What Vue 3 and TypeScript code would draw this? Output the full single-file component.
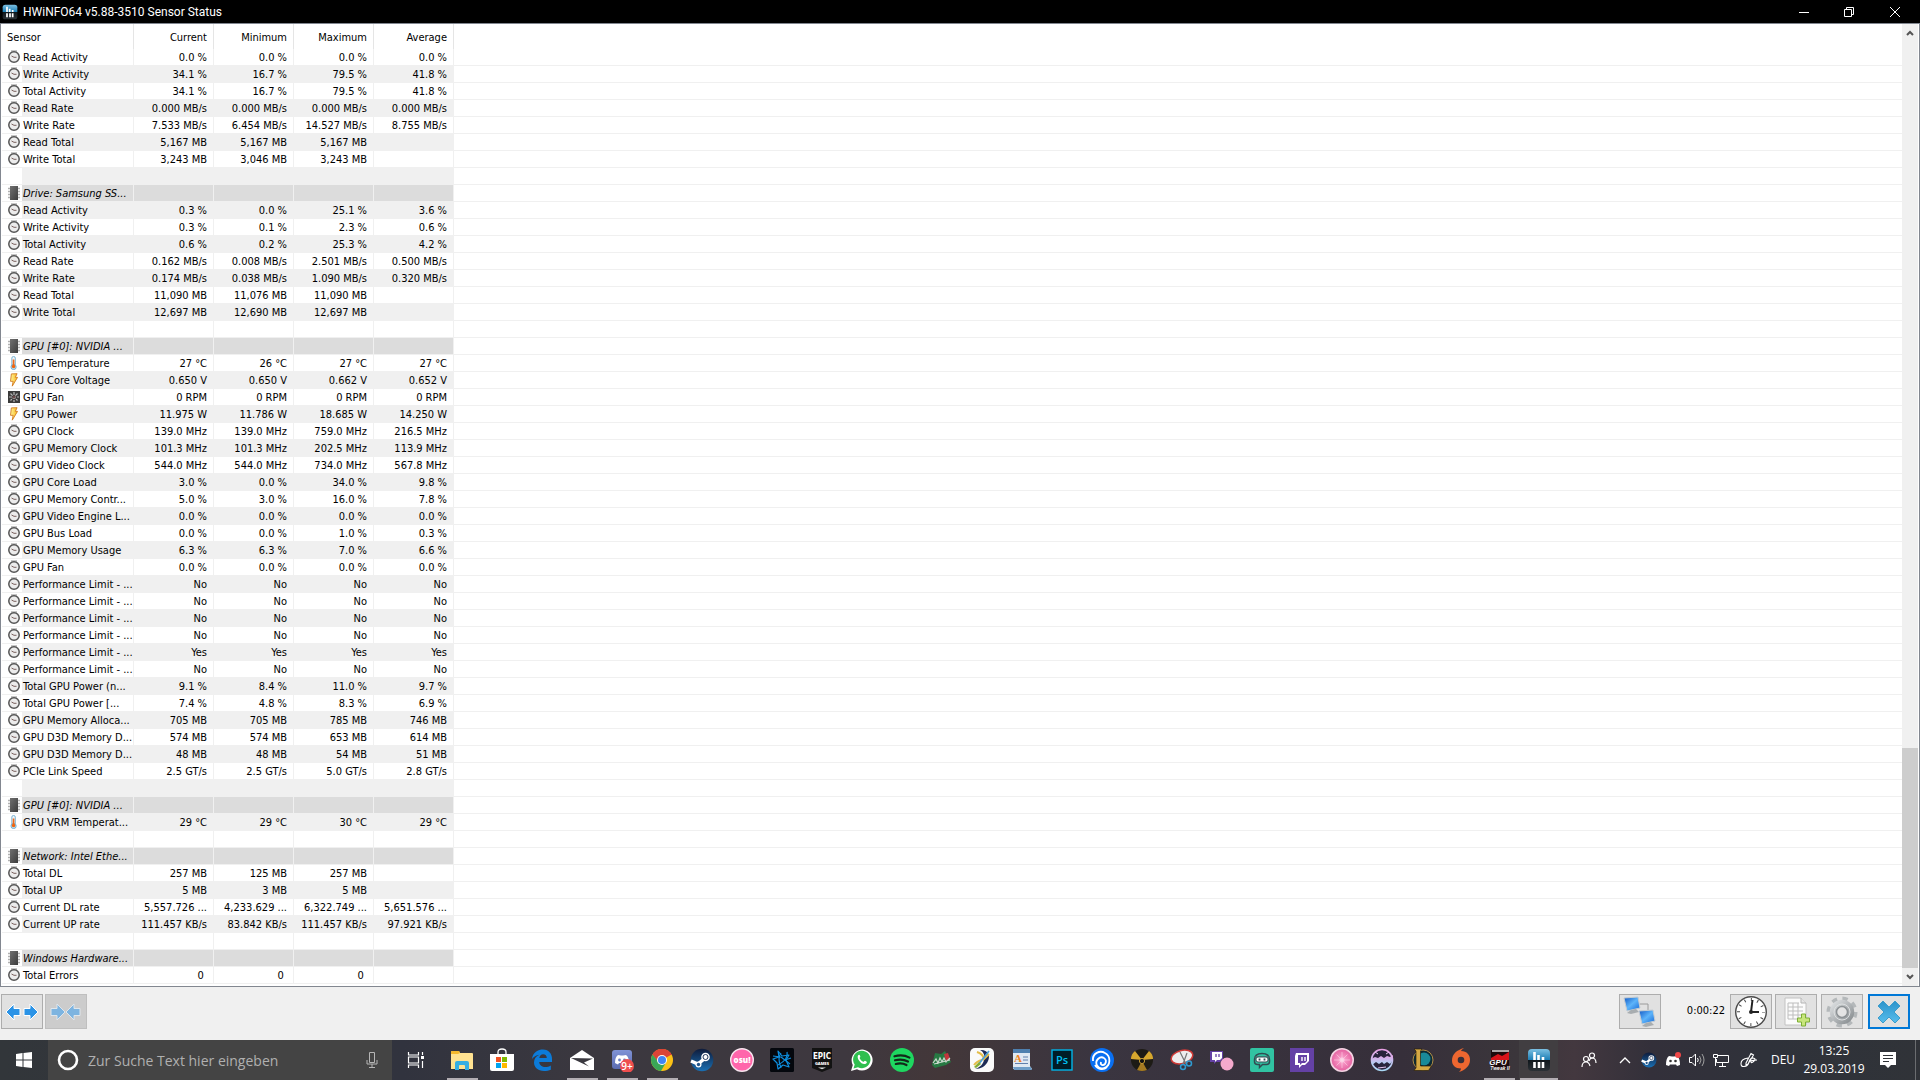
<script setup lang="ts">
import { ref } from 'vue'

type Kind = 'clock' | 'chip' | 'temp' | 'volt' | 'fan' | ''
interface Row {
  kind: Kind
  label: string
  values: string[]
}

const row = (kind: Kind, label: string, values = ''): Row => {
  const list = values ? values.split('|') : []
  while (list.length < 4) list.push('')
  return { kind, label, values: list }
}
const same = (value: string) => [value, value, value, value].join('|')

const columns = ['Current', 'Minimum', 'Maximum', 'Average']

const rows: Row[] = [
  row('clock', 'Read Activity', same('0.0 %')),
  row('clock', 'Write Activity', '34.1 %|16.7 %|79.5 %|41.8 %'),
  row('clock', 'Total Activity', '34.1 %|16.7 %|79.5 %|41.8 %'),
  row('clock', 'Read Rate', same('0.000 MB/s')),
  row('clock', 'Write Rate', '7.533 MB/s|6.454 MB/s|14.527 MB/s|8.755 MB/s'),
  row('clock', 'Read Total', '5,167 MB|5,167 MB|5,167 MB'),
  row('clock', 'Write Total', '3,243 MB|3,046 MB|3,243 MB'),
  row('', ''),
  row('chip', 'Drive: Samsung SS...'),
  row('clock', 'Read Activity', '0.3 %|0.0 %|25.1 %|3.6 %'),
  row('clock', 'Write Activity', '0.3 %|0.1 %|2.3 %|0.6 %'),
  row('clock', 'Total Activity', '0.6 %|0.2 %|25.3 %|4.2 %'),
  row('clock', 'Read Rate', '0.162 MB/s|0.008 MB/s|2.501 MB/s|0.500 MB/s'),
  row('clock', 'Write Rate', '0.174 MB/s|0.038 MB/s|1.090 MB/s|0.320 MB/s'),
  row('clock', 'Read Total', '11,090 MB|11,076 MB|11,090 MB'),
  row('clock', 'Write Total', '12,697 MB|12,690 MB|12,697 MB'),
  row('', ''),
  row('chip', 'GPU [#0]: NVIDIA ...'),
  row('temp', 'GPU Temperature', '27 °C|26 °C|27 °C|27 °C'),
  row('volt', 'GPU Core Voltage', '0.650 V|0.650 V|0.662 V|0.652 V'),
  row('fan', 'GPU Fan', same('0 RPM')),
  row('volt', 'GPU Power', '11.975 W|11.786 W|18.685 W|14.250 W'),
  row('clock', 'GPU Clock', '139.0 MHz|139.0 MHz|759.0 MHz|216.5 MHz'),
  row('clock', 'GPU Memory Clock', '101.3 MHz|101.3 MHz|202.5 MHz|113.9 MHz'),
  row('clock', 'GPU Video Clock', '544.0 MHz|544.0 MHz|734.0 MHz|567.8 MHz'),
  row('clock', 'GPU Core Load', '3.0 %|0.0 %|34.0 %|9.8 %'),
  row('clock', 'GPU Memory Contr...', '5.0 %|3.0 %|16.0 %|7.8 %'),
  row('clock', 'GPU Video Engine L...', same('0.0 %')),
  row('clock', 'GPU Bus Load', '0.0 %|0.0 %|1.0 %|0.3 %'),
  row('clock', 'GPU Memory Usage', '6.3 %|6.3 %|7.0 %|6.6 %'),
  row('clock', 'GPU Fan', same('0.0 %')),
  row('clock', 'Performance Limit - ...', same('No')),
  row('clock', 'Performance Limit - ...', same('No')),
  row('clock', 'Performance Limit - ...', same('No')),
  row('clock', 'Performance Limit - ...', same('No')),
  row('clock', 'Performance Limit - ...', same('Yes')),
  row('clock', 'Performance Limit - ...', same('No')),
  row('clock', 'Total GPU Power (n...', '9.1 %|8.4 %|11.0 %|9.7 %'),
  row('clock', 'Total GPU Power [...', '7.4 %|4.8 %|8.3 %|6.9 %'),
  row('clock', 'GPU Memory Alloca...', '705 MB|705 MB|785 MB|746 MB'),
  row('clock', 'GPU D3D Memory D...', '574 MB|574 MB|653 MB|614 MB'),
  row('clock', 'GPU D3D Memory D...', '48 MB|48 MB|54 MB|51 MB'),
  row('clock', 'PCIe Link Speed', '2.5 GT/s|2.5 GT/s|5.0 GT/s|2.8 GT/s'),
  row('', ''),
  row('chip', 'GPU [#0]: NVIDIA ...'),
  row('temp', 'GPU VRM Temperat...', '29 °C|29 °C|30 °C|29 °C'),
  row('', ''),
  row('chip', 'Network: Intel Ethe...'),
  row('clock', 'Total DL', '257 MB|125 MB|257 MB'),
  row('clock', 'Total UP', '5 MB|3 MB|5 MB'),
  row('clock', 'Current DL rate', '5,557.726 ...|4,233.629 ...|6,322.749 ...|5,651.576 ...'),
  row('clock', 'Current UP rate', '111.457 KB/s|83.842 KB/s|111.457 KB/s|97.921 KB/s'),
  row('', ''),
  row('chip', 'Windows Hardware...'),
  row('clock', 'Total Errors', '0\u00a0|0\u00a0|0\u00a0'),
]

interface Mark {
  text: string
  x: number
  y: number
  size: number
  cls: string
}
interface Task {
  id: string
  name: string
  running?: boolean
  active?: boolean
  narrow?: boolean
  marks?: Mark[]
}
const tasks: Task[] = [
  { id: 'explorer', name: 'Explorer', running: true },
  { id: 'store', name: 'Store' },
  { id: 'edge', name: 'Edge' },
  { id: 'mail', name: 'Mail', running: true },
  { id: 'discord', name: 'Discord', running: true, marks: [{ text: '9+', x: 17, y: 22, size: 10, cls: 'badge' }] },
  { id: 'chrome', name: 'Chrome', running: true },
  { id: 'steam', name: 'Steam' },
  { id: 'osu', name: 'osu!', marks: [{ text: 'osu!', x: 12, y: 15, size: 8, cls: 'heavy' }] },
  { id: 'bnet', name: 'Battle.net' },
  {
    id: 'epic',
    name: 'Epic Games',
    marks: [
      { text: 'EPIC', x: 12, y: 11, size: 8, cls: 'tall' },
      { text: 'GAMES', x: 12, y: 17, size: 4, cls: 'heavy' },
    ],
  },
  { id: 'whatsapp', name: 'WhatsApp' },
  { id: 'spotify', name: 'Spotify' },
  { id: 'leaf', name: 'Game' },
  { id: 'paint', name: 'Paint Tool' },
  { id: 'wordpad', name: 'WordPad', marks: [{ text: 'A', x: 8, y: 14, size: 11, cls: 'letter' }] },
  { id: 'ps', name: 'Photoshop', marks: [{ text: 'Ps', x: 12, y: 16, size: 11, cls: 'adobe' }] },
  { id: 'uplay', name: 'Uplay' },
  { id: 'hazard', name: 'Afterburner' },
  { id: 'snip', name: 'Snipping Tool' },
  { id: 'twitchball', name: 'Stream Companion' },
  { id: 'slobs', name: 'Streamlabs' },
  { id: 'twitch', name: 'Twitch' },
  { id: 'lazer', name: 'Lazer' },
  { id: 'orb', name: 'Orb' },
  { id: 'lol', name: 'League', narrow: true },
  { id: 'origin', name: 'Origin', narrow: true },
  {
    id: 'tweak',
    name: 'GPU Tweak',
    narrow: true,
    running: true,
    marks: [
      { text: 'GPU', x: 10, y: 17, size: 8, cls: 'slant' },
      { text: 'Tweak II', x: 12, y: 22, size: 5, cls: 'slant' },
    ],
  },
  { id: 'hwinfo', name: 'HWiNFO64', narrow: true, running: true, active: true },
]

const query = ref('')
</script>

<template>
  <div class="screen">
    <svg class="sprite" width="0" height="0" aria-hidden="true">
      <defs>
        <linearGradient id="gChip" x1="0" y1="0" x2="1" y2="1">
          <stop offset="0" stop-color="#707070" /><stop offset="1" stop-color="#3c3c3c" />
        </linearGradient>
        <linearGradient id="gBolt" x1="0" y1="0" x2="1" y2="0">
          <stop offset="0" stop-color="#fff59a" /><stop offset="1" stop-color="#f9b81c" />
        </linearGradient>
        <linearGradient id="gHw" x1="0" y1="0" x2="0" y2="1">
          <stop offset="0" stop-color="#7cc0e2" /><stop offset="0.5" stop-color="#1b7db4" />
          <stop offset="0.51" stop-color="#10171c" /><stop offset="1" stop-color="#2b3136" />
        </linearGradient>
        <linearGradient id="gScreen" x1="0" y1="0" x2="1" y2="1">
          <stop offset="0" stop-color="#0f56c4" /><stop offset="0.5" stop-color="#5db4fa" />
          <stop offset="1" stop-color="#1566d6" />
        </linearGradient>
        <linearGradient id="gGear" x1="0" y1="0" x2="1" y2="1">
          <stop offset="0" stop-color="#d9dcde" /><stop offset="1" stop-color="#8c9194" />
        </linearGradient>
        <linearGradient id="gX" x1="0" y1="0" x2="0" y2="1">
          <stop offset="0" stop-color="#2b93cb" /><stop offset="1" stop-color="#58bdec" />
        </linearGradient>
        <linearGradient id="gSteam" x1="0" y1="0" x2="0" y2="1">
          <stop offset="0" stop-color="#0f1b3a" /><stop offset="1" stop-color="#1a70b4" />
        </linearGradient>
        <linearGradient id="gDiscord" x1="0" y1="0" x2="0" y2="1">
          <stop offset="0" stop-color="#8093d6" /><stop offset="1" stop-color="#5b6bb0" />
        </linearGradient>
        <linearGradient id="gOrb" x1="0" y1="0" x2="0" y2="1">
          <stop offset="0" stop-color="#e8a0e4" /><stop offset="1" stop-color="#a9d8f5" />
        </linearGradient>
        <radialGradient id="gPink">
          <stop offset="0" stop-color="#ffffff" /><stop offset="0.3" stop-color="#f795c4" />
          <stop offset="1" stop-color="#e3609f" />
        </radialGradient>
      </defs>

      <symbol id="i-clock" viewBox="0 0 12 14">
        <path d="M3 1h6" stroke="#b5b5b5" stroke-width="1.500" />
        <circle cx="6" cy="7" r="5.200" fill="#ececec" stroke="#555" stroke-width="1.500" />
        <path d="M3.500 6L6 7.300L8.500 7.300" stroke="#7b625f" stroke-width="1" fill="none" />
      </symbol>
      <symbol id="i-chip" viewBox="0 0 12 14">
        <path d="M0 2.500h12M0 5.500h12M0 8.500h12M0 11.500h12" stroke="#b0b0b0" stroke-width="1.500" />
        <rect x="2" y="0" width="8" height="14" fill="url(#gChip)" />
      </symbol>
      <symbol id="i-temp" viewBox="0 0 12 16">
        <rect x="3.500" y="0.500" width="4" height="11" rx="2" fill="#eef6fb" stroke="#6da9cc" />
        <circle cx="5.500" cy="12.500" r="3" fill="#bfe0f2" stroke="#6da9cc" />
        <path d="M5.500 4v8" stroke="#ee6a1a" stroke-width="2" />
        <circle cx="5.500" cy="12" r="2" fill="#f0640f" />
      </symbol>
      <symbol id="i-volt" viewBox="0 0 12 16">
        <path d="M3 1L9.500 .8L7.500 5L10 5L4 15L5 9.500L2 9.500z" fill="url(#gBolt)" stroke="#d1781c" />
      </symbol>
      <symbol id="i-fan" viewBox="0 0 12 12">
        <rect width="12" height="12" fill="#3b3b3b" />
        <path d="M6 1v10M1 6h10M2.500 2.500l7 7M9.500 2.500l-7 7" stroke="#b9b9b9" stroke-width="1.200" stroke-dasharray="3 1" />
        <circle cx="6" cy="6" r="1.500" fill="#6b4a4a" />
      </symbol>

      <symbol id="i-hwinfo" viewBox="0 0 24 24">
        <rect x="1" y="1" width="22" height="22" rx="4" fill="url(#gHw)" />
        <path d="M7.500 4v8M11.500 7v5M16 9v3M7.500 14v6M12 14v6M16 14v6" stroke="#fff" stroke-width="2.600" />
      </symbol>
      <symbol id="i-explorer" viewBox="0 0 24 24">
        <path d="M1 5V4q0-1 1-1h7l1 2h12q1 0 1 1v15H1z" fill="#ffe291" />
        <path d="M1 6V4q0-1 1-1h7l1 2-2 1z" fill="#f5b92e" />
        <path d="M5 22v-7q0-2 2-2h10q2 0 2 2v7h-4v-4q0-1-1-1h-4q-1 0-1 1v4z" fill="#35aee2" />
      </symbol>
      <symbol id="i-store" viewBox="0 0 24 24">
        <path d="M8 7V4q0-3 4-3t4 3v3" fill="none" stroke="#fff" stroke-width="1.300" />
        <path d="M0 6h24v15q0 2-2 2H2q-2 0-2-2z" fill="#fff" />
        <path d="M6 9h5v5H6z" fill="#f25022" /><path d="M12 9h5v5h-5z" fill="#7fba00" />
        <path d="M6 15h5v5H6z" fill="#00a4ef" /><path d="M12 15h5v5h-5z" fill="#ffb900" />
      </symbol>
      <symbol id="i-edge" viewBox="0 0 24 24">
        <path d="M2 11C3 4 8 1.500 13 1.500c6 0 9 4.500 9 9.500v3H9.200c.3 3.500 3 5 6 5 2 0 4-.6 5.600-1.600v4.400C19 22.700 16.500 23 14 23 7.800 23 4 19.300 4 14.500c0-3.500 2-6.500 5.500-7.800C6 7 3.500 8.700 2 11zm7.300-1h7.500c0-2.300-1.400-3.800-3.600-3.800-2.100 0-3.500 1.600-3.900 3.800z" fill="#0c7bd8" />
      </symbol>
      <symbol id="i-mail" viewBox="0 0 24 24">
        <path d="M0 10L12 2l12 8v12H0z" fill="#fff" />
        <path d="M1 10L23 10.500l-9 4 5 4z" fill="#3a383f" />
      </symbol>
      <symbol id="i-discord" viewBox="0 0 24 24">
        <rect x="2" y="2" width="20" height="19" rx="3" fill="url(#gDiscord)" />
        <path d="M5 15q0-6 3-8l3 .5h2l3-.5q3 2 3 8l-3 1.500-1-1.500h-6l-1 1.500z" fill="#fff" />
        <circle cx="9.500" cy="12" r="1.400" fill="#6f80c4" /><circle cx="14.500" cy="12" r="1.400" fill="#6f80c4" />
        <circle cx="17" cy="18" r="7" fill="#ef4e4e" />
      </symbol>
      <symbol id="i-chrome" viewBox="0 0 24 24">
        <circle cx="12" cy="12" r="11" fill="#fbc116" />
        <path d="M12 12L2.500 6.500A11 11 0 0 1 21.500 6.500z" fill="#db4437" /><path d="M12 7h9.800A11 11 0 0 0 2.500 6.500l5 7z" fill="#db4437" />
        <path d="M2.500 6.500A11 11 0 0 0 11 23l5-8.500-7.500-.5z" fill="#3aa757" />
        <circle cx="12" cy="12" r="5" fill="#fff" /><circle cx="12" cy="12" r="4" fill="#4285f4" />
      </symbol>
      <symbol id="i-steam" viewBox="0 0 24 24">
        <circle cx="12" cy="12" r="11.300" fill="url(#gSteam)" />
        <path d="M1 13l7 3 6-5" stroke="#fff" stroke-width="3.500" fill="none" />
        <circle cx="15.500" cy="9" r="4.300" fill="#fff" /><circle cx="15.500" cy="9" r="2.500" fill="none" stroke="#24395c" />
        <circle cx="8.500" cy="16.500" r="3" fill="#fff" /><circle cx="8.500" cy="16.500" r="1.700" fill="#22558a" />
      </symbol>
      <symbol id="i-osu" viewBox="0 0 24 24">
        <circle cx="12" cy="12" r="11.300" fill="#ff66ab" stroke="#f7e6ef" stroke-width="1.400" />
      </symbol>
      <symbol id="i-bnet" viewBox="0 0 24 24">
        <rect width="24" height="24" rx="1.500" fill="#04070d" />
        <g fill="none" stroke="#0e8fe0" stroke-width="1.200" stroke-linejoin="round">
          <path d="M8 3l4 5 7-1-3 5 3 7-6-2-5 4-1-6-4-4 6-2z" />
          <path d="M3 8l8 1 9 7M11 5q-4 5 0 15M17 4q2 7-9 13M21 10l-6 2" />
        </g>
      </symbol>
      <symbol id="i-epic" viewBox="0 0 24 24">
        <path d="M2 0h20v20l-10 4-10-4z" fill="#121212" />
        <path d="M8 19.500h8l-4 1.700z" fill="#ddd" />
      </symbol>
      <symbol id="i-whatsapp" viewBox="0 0 24 24">
        <path d="M1 23l1.800-6A10.500 10.500 0 1 1 7 21.300z" fill="#fff" />
        <path d="M3.500 20.500l1.200-4A8.700 8.700 0 1 1 8 19.300z" fill="#2fbf4f" />
        <path d="M8 7.500c1-1.200 1.800-.8 2.300 1 .3 1-1 1-.6 1.800 1 2 2 2.800 3.600 3.400.7.300 1-1.300 1.800-1 2.300 1 2.200 1.500 1 2.700-3.500 3-10-4.500-8.100-7.900z" fill="#fff" />
      </symbol>
      <symbol id="i-spotify" viewBox="0 0 24 24">
        <circle cx="12" cy="12" r="12" fill="#1ed760" />
        <path d="M4.500 8.300q8-2.500 15 1.300M5 12.300q7-2 13 1.200M5.800 16q6-1.500 10.700 1" fill="none" stroke="#12291a" stroke-width="2.200" stroke-linecap="round" />
      </symbol>
      <symbol id="i-leaf" viewBox="0 0 24 24">
        <path d="M5 5l6 1 4-3 2 4 4 7-5 3-11 3-3-3z" fill="#277a43" /><path d="M14 6l4-1 2 6-4 2z" fill="#c4363c" />
        <path d="M3 15l3-4 2 4 2-5 2 4 2-4 2 4 4-4M4 16l16-4" stroke="#c9d9cd" stroke-width="1.200" fill="none" />
      </symbol>
      <symbol id="i-paint" viewBox="0 0 24 24">
        <rect width="24" height="24" rx="5" fill="#fafafa" />
        <path d="M10 2c7-1 11 5 8 11-2 5-7 8-13 8 6-2 8-5 9-9s0-8-4-10z" fill="#1d2b55" />
        <path d="M7 4q6 2 7 7l5-5M4 17q3-4 8-5" stroke="#e4bd49" stroke-width="2" fill="none" />
        <path d="M19 3L8 17" stroke="#4d9fd8" stroke-width="1.700" /><path d="M9 14l2 2-5 4-2-1z" fill="#86ad33" />
      </symbol>
      <symbol id="i-wordpad" viewBox="0 0 24 24">
        <path d="M3 1h17v17l2 3H3z" fill="#dfe8f2" /><path d="M3 1h17v4H3z" fill="#4e7fae" /><path d="M3 19h18l1 3H4z" fill="#6f9dc7" />
        <path d="M13 9h5M13 12h5M5 15.500h13" stroke="#6180ad" />
      </symbol>
      <symbol id="i-ps" viewBox="0 0 24 24">
        <rect x="2" y="2" width="20" height="20" fill="#001d26" stroke="#00b5e8" stroke-width="1.400" />
      </symbol>
      <symbol id="i-uplay" viewBox="0 0 24 24">
        <circle cx="12" cy="12" r="12" fill="#0a70f2" />
        <path d="M3 13C2 5 10 2 15 5c6 3 6 13-1 15-6 2-10-5-6-9 4-4 10 0 7 5-2 2-5 1-4-2M5 17c3 5 9 5 12 2" fill="none" stroke="#fff" stroke-width="1.800" />
      </symbol>
      <symbol id="i-hazard" viewBox="0 0 24 24">
        <circle cx="12" cy="12" r="11" fill="#1d1b15" />
        <path d="M12 12L5 3Q1 6 1 11zM12 12l7-9q4 3 4 8z" fill="#d6a72e" /><path d="M12 13l5 9q-5 2-10 0z" fill="#a57b22" />
        <circle cx="12" cy="13" r="2.600" fill="#111" stroke="#c79b30" />
      </symbol>
      <symbol id="i-snip" viewBox="0 0 24 24">
        <ellipse cx="12" cy="9" rx="11" ry="6.500" transform="rotate(-15 12 9)" fill="#eee" stroke="#cf3a36" stroke-width="1.500" />
        <path d="M10 4l6 12M17 5l-4 11" stroke="#777" stroke-width="1.200" />
        <circle cx="13" cy="19" r="2.500" fill="none" stroke="#2f9ad1" stroke-width="1.500" /><circle cx="19" cy="15.500" r="2.500" fill="none" stroke="#2f9ad1" stroke-width="1.500" />
      </symbol>
      <symbol id="i-twitchball" viewBox="0 0 24 24">
        <path d="M0 3h13v8l-3 3H6l-2 2v-2H0z" fill="#6441a5" /><path d="M2 4h10v6l-2 2H7l-2 2v-2H2z" fill="#fff" />
        <path d="M6 6v3M9 6v3" stroke="#6441a5" stroke-width="1.300" /><circle cx="17" cy="16" r="6.500" fill="#f4a9cc" />
      </symbol>
      <symbol id="i-slobs" viewBox="0 0 24 24">
        <rect width="24" height="24" rx="2" fill="#31c3a2" />
        <path d="M4.500 12q0-6.500 7.500-6.500t7.500 6.500v1.500q0 3-3 3h-4l-3 3v-3H7.500q-3 0-3-3z" fill="none" stroke="#314c52" stroke-width="1.500" />
        <path d="M4 9h16" stroke="#4b7075" /><rect x="6" y="9" width="12" height="5" rx="2" fill="#fff" stroke="#314c52" />
        <path d="M9.500 10.500v2M14.500 10.500v2" stroke="#314c52" stroke-width="1.800" />
      </symbol>
      <symbol id="i-twitch" viewBox="0 0 24 24">
        <rect width="24" height="24" fill="#6441a5" />
        <path d="M6 5h13v8l-4 4h-3l-3 3v-3H5V8z" fill="#fff" /><path d="M8 7h9v6l-2 2h-3l-2 2v-2H8z" fill="#6441a5" />
        <path d="M12 9v4M15 9v4" stroke="#fff" stroke-width="1.400" />
      </symbol>
      <symbol id="i-lazer" viewBox="0 0 24 24">
        <circle cx="12" cy="12" r="11.200" fill="url(#gPink)" stroke="#f3d3e2" stroke-width="1.600" />
        <path d="M12 4v16M4 12h16M6.500 6.500l11 11M17.500 6.500l-11 11" stroke="#fcd3e6" stroke-width=".6" />
      </symbol>
      <symbol id="i-orb" viewBox="0 0 24 24">
        <circle cx="12" cy="12" r="10.500" fill="#29243c" stroke="url(#gOrb)" stroke-width="1.600" />
        <path d="M1 11l4-2 3 1 3-2 3 2 3-2 3 1 3-2v5l-3 4-3-2-3 2-2-2-3 2-3-2-4 3z" fill="url(#gOrb)" />
        <path d="M5 4l3 2M19 4l-3 2M8 20l8-1" stroke="#e8c6f0" />
      </symbol>
      <symbol id="i-lol" viewBox="0 0 24 24">
        <circle cx="13" cy="12" r="10" fill="#0b2a35" stroke="#b08d45" />
        <circle cx="14" cy="11" r="6.500" fill="#198a98" />
        <path d="M4 1h8l-1.500 2v15h11l-3 4.500H4L6 20V3z" fill="#d5a843" stroke="#2a210d" stroke-width=".7" />
      </symbol>
      <symbol id="i-origin" viewBox="0 0 24 24">
        <path d="M15 0q-3 2-3 3c6 0 9 4 9 9 0 6-5 10-11 12q2-2 2-3.500C6 20.500 3 17 3 12.500 3 6 8 2 15 0z" fill="#ee6730" />
        <circle cx="12" cy="12" r="3.300" fill="#382f38" />
      </symbol>
      <symbol id="i-tweak" viewBox="0 0 24 24">
        <rect x="3" y="2" width="18" height="20" fill="#1d0b0c" /><path d="M4 3h17" stroke="#ddd" stroke-width="1.500" />
        <path d="M3 10l7-4 4 2 7-4v8H3z" fill="#d8141a" />
      </symbol>
    </svg>

    <header class="titlebar">
      <svg class="app-icon"><use href="#i-hwinfo" /></svg>
      <h1>HWiNFO64 v5.88-3510 Sensor Status</h1>
      <button aria-label="Minimize"><svg viewBox="0 0 12 12"><path d="M1 6.500h10" /></svg></button>
      <button aria-label="Restore"><svg viewBox="0 0 12 12"><path d="M1.500 3.500h7v7h-7zM3.500 3V1.500h7v7H9" /></svg></button>
      <button aria-label="Close"><svg viewBox="0 0 12 12"><path d="M1 1l10 10M11 1L1 11" /></svg></button>
    </header>

    <main class="list">
      <div class="list-body">
        <table>
          <colgroup>
            <col class="c-icon" /><col class="c-name" />
            <col v-for="c in columns" :key="c" class="c-value" /><col />
          </colgroup>
          <thead>
            <tr>
              <th colspan="2" class="first">Sensor</th>
              <th v-for="c in columns" :key="c">{{ c }}</th>
              <th class="rest"></th>
            </tr>
          </thead>
          <tbody>
            <tr v-for="(r, i) in rows" :key="i" :class="{ odd: i % 2 === 1, section: r.kind === 'chip' }">
              <td class="icon">
                <svg v-if="r.kind"><use :href="'#i-' + r.kind" /></svg>
              </td>
              <td class="name">{{ r.label }}</td>
              <td v-for="(v, j) in r.values" :key="j" class="value">{{ v }}</td>
              <td class="rest"></td>
            </tr>
          </tbody>
        </table>
      </div>
      <div class="scrollbar">
        <button aria-label="Scroll up"><svg viewBox="0 0 8 6"><path d="M1 5l3-3 3 3" /></svg></button>
        <div class="track"><div class="thumb"></div></div>
        <button aria-label="Scroll down"><svg viewBox="0 0 8 6"><path d="M1 1l3 3 3-3" /></svg></button>
      </div>
    </main>

    <footer class="toolbar">
      <button class="tool" aria-label="Expand columns">
        <svg width="34" height="20" viewBox="0 0 34 20">
          <path d="M1 10l8-8v4.500h6v7H9V18zM33 10l-8-8v4.500h-6v7h6V18z" fill="#2b93e6" stroke="#fff" />
        </svg>
      </button>
      <button class="tool disabled" aria-label="Shrink columns" disabled>
        <svg width="34" height="20" viewBox="0 0 34 20">
          <path d="M16 10L8 2v4.500H2v7h6V18zM17 10l8-8v4.500h6v7h-6V18z" fill="#7db4e0" stroke="#dfe6ec" />
        </svg>
      </button>
      <span class="spacer"></span>
      <button class="tool" aria-label="Remote">
        <svg width="34" height="32" viewBox="0 0 34 32">
          <path d="M17 8h8v6" fill="none" stroke="#9a9a9a" />
          <path d="M1 2l14-1 2 11-13 3z" fill="url(#gScreen)" stroke="#c4ccd2" /><path d="M8 14l5-1 3 3-8 2-4-1z" fill="#a8adb0" />
          <path d="M16 15l14-1 2 11-13 3z" fill="url(#gScreen)" stroke="#c4ccd2" /><path d="M23 27l5-1 3 3-8 2-4-1z" fill="#a8adb0" />
        </svg>
      </button>
      <span class="timer">0:00:22</span>
      <button class="tool" aria-label="Reset clock">
        <svg width="34" height="34" viewBox="0 0 34 34">
          <circle cx="17" cy="17" r="15.300" fill="#fff" stroke="#4a4a4a" stroke-width="1.400" />
          <circle cx="17" cy="17" r="12.500" fill="none" stroke="#4a4a4a" stroke-width="3" stroke-dasharray="1 5.545" stroke-dashoffset=".5" />
          <path d="M17 17l1.500-12M17 17h8" stroke="#222" stroke-width="2" /><circle cx="17" cy="17" r="2" fill="#222" />
        </svg>
      </button>
      <button class="tool gap-s" aria-label="Log to file">
        <svg width="34" height="32" viewBox="0 0 34 32">
          <path d="M6 2h16l5 5v22H6z" fill="#fbfbfb" stroke="#c2c2c2" /><path d="M22 2v5h5" fill="#e6e6e6" stroke="#b5b5b5" />
          <path d="M9 7h11M9 11h15M9 15h15M9 19h13M9 23h10M9 7v16M14 7v16M19 7v16" stroke="#bdbdbd" fill="none" />
          <path d="M22.500 18h4v4h4v4h-4v4h-4v-4h-4v-4h4z" fill="#c8e67c" stroke="#7cae35" />
        </svg>
      </button>
      <button class="tool gap-m" aria-label="Settings">
        <svg width="34" height="34" viewBox="0 0 34 34">
          <circle cx="17" cy="17" r="13.500" fill="none" stroke="#b4b8ba" stroke-width="4" stroke-dasharray="5.300 5.303" />
          <circle cx="17" cy="17" r="9" fill="none" stroke="url(#gGear)" stroke-width="6.500" />
          <circle cx="17" cy="17" r="5.500" fill="#e4e4e4" stroke="#8d9295" stroke-width="1.500" />
          <circle cx="17" cy="17" r="8" fill="none" stroke="#dde0e1" />
        </svg>
      </button>
      <button class="tool default gap-l" aria-label="Close sensors">
        <svg width="26" height="26" viewBox="0 0 26 26">
          <path d="M7 2l6 6 6-6 5 5-6 6 6 6-5 5-6-6-6 6-5-5 6-6-6-6z" fill="url(#gX)" stroke="#3c9ccb" />
        </svg>
      </button>
    </footer>

    <nav class="taskbar">
      <button class="start" aria-label="Start">
        <svg width="16" height="16" viewBox="0 0 16 16"><path d="M0 2l6.500-1v6.500H0zM7.500 1L16 0v7.500H7.500zM0 8.500h6.500V15L0 14zM7.500 8.500H16V16l-8.500-1z" fill="#fff" /></svg>
      </button>
      <label class="search">
        <svg width="22" height="22" viewBox="0 0 22 22"><circle cx="11" cy="11" r="9" fill="none" stroke="#fff" stroke-width="2.600" /></svg>
        <input v-model="query" type="text" placeholder="Zur Suche Text hier eingeben" aria-label="Search" />
        <svg width="12" height="18" viewBox="0 0 12 18"><path d="M3.500 1.500h5v10h-5zM1 9v4h10V9M6 13v3M3 16.500h6" fill="none" stroke="#b5b5b5" /></svg>
      </label>
      <button class="taskview" aria-label="Task view">
        <svg width="18" height="16" viewBox="0 0 18 16"><path d="M1.500 0v3h10V0M1.500 5h10v6h-10zM1.500 16v-3h10v3M15.500 0v3M15.500 9v7" fill="none" stroke="#fff" stroke-width="1.200" /><path d="M14 4h3v3h-3z" fill="#fff" /></svg>
      </button>
      <button v-for="t in tasks" :key="t.id" class="task" :class="{ running: t.running, active: t.active, narrow: t.narrow }" :aria-label="t.name">
        <svg width="24" height="24" viewBox="0 0 24 24">
          <use :href="'#i-' + t.id" width="24" height="24" />
          <text v-for="m in t.marks" :key="m.text" :x="m.x" :y="m.y" :font-size="m.size" :class="m.cls" text-anchor="middle">{{ m.text }}</text>
        </svg>
      </button>
      <span class="spacer"></span>
      <div class="tray">
        <button class="people" aria-label="People">
          <svg width="16" height="16" viewBox="0 0 16 16"><g fill="none" stroke="#fff" stroke-width="1.200"><circle cx="5" cy="7" r="2.500" /><path d="M1 15q0-5 4-5 3 0 4 4" /><circle cx="11" cy="3.500" r="2.500" /><path d="M8 9q1-3 3-3 4 0 4 5" /></g></svg>
        </button>
        <button aria-label="Hidden icons"><svg width="12" height="8" viewBox="0 0 12 8"><path d="M1 7l5-5 5 5" fill="none" stroke="#fff" stroke-width="1.300" /></svg></button>
        <button aria-label="Steam"><svg width="16" height="16"><use href="#i-steam" /></svg></button>
        <button aria-label="Discord"><svg width="16" height="16" viewBox="0 0 16 16"><path d="M1 13q0-7 3-9l3 .5h2l3-.5q3 2 3 9l-3 1-1-1.500H5L4 14z" fill="#fff" /><circle cx="5.500" cy="9" r="1.300" fill="#333" /><circle cx="10.500" cy="9" r="1.300" fill="#333" /><circle cx="13" cy="3" r="3" fill="#f04747" /></svg></button>
        <button aria-label="Volume"><svg width="16" height="14" viewBox="0 0 16 14"><path d="M.5 4.500h2.500L6.500 1v12L3 9.500H.5zM8.500 5q1.500 2 0 4" fill="none" stroke="#fff" /><path d="M10.500 3q3 4 0 8M13 1q4 6 0 12" fill="none" stroke="#a0a0a0" /></svg></button>
        <button aria-label="Network"><svg width="16" height="14" viewBox="0 0 16 14"><path d="M5 2.500h10.500v7H3.500V6M.5 1.500h4v3h-4zM2.500 5v8M9.500 10v3M6 13.500h7" fill="none" stroke="#fff" /></svg></button>
        <button class="pen" aria-label="Ink workspace"><svg width="18" height="16" viewBox="0 0 18 16"><path d="M6 11L11 1.500l2.500 1.500L8 12l-2 1zM8 6Q1 7 1 11.500 1 15 4 14.500 8 14 9 10q1-4 4-4 3.500.5 1 3t-3 1q-1-2 6-2" fill="none" stroke="#fff" stroke-width="1.100" /></svg></button>
        <button class="lang">DEU</button>
        <button class="clock"><span>13:25</span><span>29.03.2019</span></button>
        <button class="notes" aria-label="Notifications"><svg width="16" height="16" viewBox="0 0 16 16"><path d="M0 0h16v13h-5l-3 3-3-3H0z" fill="#fff" /><path d="M3 3.500h10M3 6.500h10M3 9.500h6" stroke="#303338" /></svg></button>
        <button class="desktop" aria-label="Show desktop"></button>
      </div>
    </nav>
  </div>
</template>

<style>
html,
body {
  height: 100%;
  overflow: hidden;
}
</style>

<style scoped>
.screen {
  height: 100vh;
  display: flex;
  flex-direction: column;
  background: #f0f0f0;
  color: #000;
  font: 11px/14px 'DejaVu Sans Condensed', 'DejaVu Sans', sans-serif;
}
.sprite {
  position: absolute;
}
button {
  border: 0;
  padding: 0;
  margin: 0;
  background: none;
  font: inherit;
  color: inherit;
  display: flex;
  align-items: center;
  justify-content: center;
}
.spacer {
  flex: 1;
}

.titlebar {
  height: 23px;
  flex: none;
  display: flex;
  align-items: center;
  background: #000;
  color: #fff;
  padding: 0 1px 0 2px;
}
.app-icon {
  width: 16px;
  height: 16px;
}
.titlebar h1 {
  flex: 1;
  margin: 0 0 0 5px;
  font: 400 12px/20px Roboto, 'Noto Sans', sans-serif;
}
.titlebar button {
  width: 45px;
  height: 20px;
}
.titlebar button:last-child {
  width: 48px;
}
.titlebar button svg {
  width: 12px;
  height: 12px;
  fill: none;
  stroke: #fff;
}

.list {
  flex: 1;
  min-height: 0;
  display: flex;
  background: #fff;
  border: 1px solid #828790;
  padding: 0 1px;
}
.list-body {
  flex: 1;
  min-width: 0;
  overflow: hidden;
}
table {
  width: 100%;
  table-layout: fixed;
  border-spacing: 0;
}
.c-icon {
  width: 20px;
}
.c-name {
  width: 112px;
}
.c-value {
  width: 80px;
}
th,
td {
  box-sizing: border-box;
  padding: 2px 6px 0 0;
  border-right: 1px solid #f0f0f0;
  text-align: right;
  font-weight: 400;
  white-space: nowrap;
}
th {
  height: 25px;
  border-right-color: #e5e5e5;
}
th.first {
  text-align: left;
  padding-left: 5px;
}
td {
  height: 17px;
  border-bottom: 1px solid #f0f0f0;
}
td.icon {
  border-right: 0;
  padding: 0;
}
td.icon svg {
  display: block;
  width: 12px;
  height: 14px;
  margin-left: 6px;
}
td.name {
  text-align: left;
  padding: 2px 0 0 1px;
}
.odd .name,
.odd .value {
  background: #f0f0f0;
}
.section .name,
.section .value {
  background: #dcdcdc;
}
.section .name {
  font-style: italic;
}
.rest {
  border-right: 0;
}

.scrollbar {
  width: 16px;
  display: flex;
  flex-direction: column;
  background: #f0f0f0;
}
.scrollbar button {
  height: 18px;
  flex: none;
}
.scrollbar svg {
  width: 8px;
  height: 6px;
  fill: none;
  stroke: #555;
  stroke-width: 2;
}
.track {
  flex: 1;
  display: flex;
  flex-direction: column;
}
.track::before {
  content: '';
  flex: 16;
}
.thumb {
  flex: 5;
  background: #cdcdcd;
}

.toolbar {
  height: 53px;
  flex: none;
  box-sizing: border-box;
  display: flex;
  align-items: flex-start;
  padding: 7px 10px 0 1px;
}
.tool {
  width: 42px;
  height: 35px;
  box-sizing: border-box;
  background: #e1e1e1;
  border: 1px solid #adadad;
}
.tool.disabled {
  margin-left: 2px;
  background: #ccc;
  border-color: #bfbfbf;
}
.tool.default {
  border: 2px solid #0078d7;
}
.gap-s {
  margin-left: 3px;
}
.gap-m {
  margin-left: 4px;
}
.gap-l {
  margin-left: 5px;
}
.timer {
  width: 69px;
  box-sizing: border-box;
  padding: 10px 5px 0 0;
  text-align: right;
}

.taskbar {
  height: 40px;
  flex: none;
  display: flex;
  color: #fff;
  font: 12px/18px 'Open Sans', 'Noto Sans', sans-serif;
  background: linear-gradient(90deg, #32363a, #31333e 21%, #3b383f 31%, #3e383f 44%, #433739 49%, #3a3540 57%, #362f3a 73%, #3b363b 79%, #43383f 82%, #33303a 86%, #2f323a 92%, #303338);
}
.start {
  width: 48px;
}
.search {
  width: 344px;
  box-sizing: border-box;
  display: flex;
  align-items: center;
  padding: 0 14px 0 9px;
  background: #444;
}
.search input {
  flex: 1;
  min-width: 0;
  border: 0;
  outline: 0;
  padding: 2px 0 0 9px;
  background: none;
  color: #fff;
  font: 14px/20px 'Open Sans', 'Noto Sans', sans-serif;
}
.search input::placeholder {
  color: #b0b0b0;
  opacity: 1;
}
.taskview {
  width: 50px;
  padding-right: 2px;
}
.task {
  width: 40px;
  box-sizing: border-box;
  border: solid transparent;
  border-width: 2px 0;
}
.task.narrow {
  width: 39px;
}
.task.running {
  background-image: linear-gradient(#b3aeb3, #b3aeb3);
  background-size: 31px 2px;
  background-position: center bottom;
  background-repeat: no-repeat;
  background-origin: border-box;
}
.task.active {
  background-color: #413e41;
  background-size: 38px 2px;
}
.badge,
.heavy,
.adobe {
  font-family: 'Open Sans', sans-serif;
  font-weight: 600;
  fill: #fff;
}
.heavy {
  font-weight: 800;
}
.adobe {
  fill: #00c0f3;
}
.tall {
  font-family: 'DejaVu Sans Condensed', sans-serif;
  font-weight: 700;
  fill: #fff;
}
.letter {
  font-family: 'Liberation Serif', serif;
  font-weight: 700;
  fill: #f08422;
}
.slant {
  font-family: 'Liberation Sans', sans-serif;
  font-weight: 700;
  font-style: italic;
  fill: #fff;
}
.tray {
  display: flex;
}
.tray button {
  width: 24px;
}
.tray .people {
  width: 48px;
}
.tray .pen {
  width: 32px;
}
.tray .lang {
  width: 36px;
}
.tray .clock {
  width: 66px;
  flex-direction: column;
}
.tray .notes {
  width: 48px;
  padding-right: 6px;
}
.tray .desktop {
  width: 5px;
  border-left: 1px solid #6b6d70;
}
</style>
